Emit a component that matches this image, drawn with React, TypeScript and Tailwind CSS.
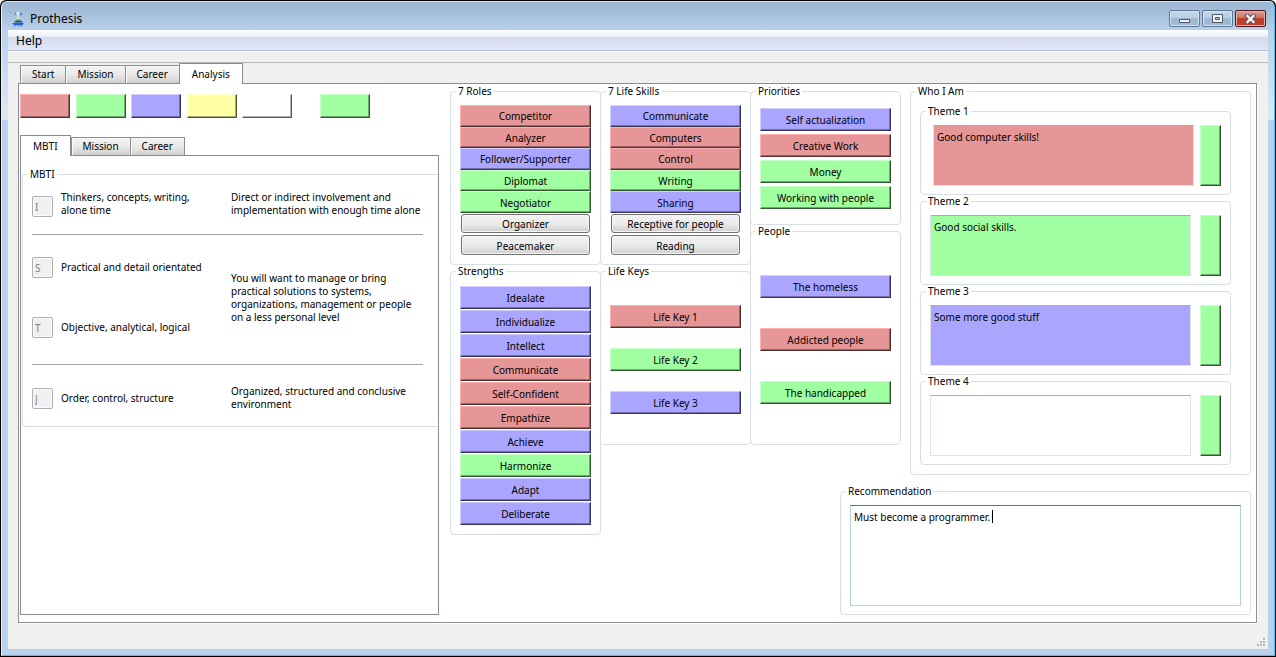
import { useState, type ReactNode } from "react";

type Tone = "red" | "green" | "purple" | "yellow" | "white";

const tones: Record<Tone, string> = {
  red: "bg-[#e69696] border-t-[#ffb0b0] border-l-[#ffb0b0] border-r-[#4d3232] border-b-[#4d3232] shadow-[inset_-1px_-1px_0_#9a6464]",
  green: "bg-[#a0ffa0] border-t-[#c8ffc8] border-l-[#c8ffc8] border-r-[#355535] border-b-[#355535] shadow-[inset_-1px_-1px_0_#6aaa6a]",
  purple: "bg-[#aaa5ff] border-t-[#d0cdff] border-l-[#d0cdff] border-r-[#383755] border-b-[#383755] shadow-[inset_-1px_-1px_0_#716eaa]",
  yellow: "bg-[#ffffa5] border-t-[#ffffd0] border-l-[#ffffd0] border-r-[#555537] border-b-[#555537] shadow-[inset_-1px_-1px_0_#aaaa6e]",
  white: "bg-white border-t-white border-l-white border-r-[#555555] border-b-[#555555] shadow-[inset_-1px_-1px_0_#b4b4b4]",
};

function Bevel({ tone, label, children, className = "" }: { tone: Tone; label?: string; children?: ReactNode; className?: string }) {
  return (
    <button type="button" aria-label={label} className={`block border text-center leading-[13px] ${tones[tone]} ${className}`}>
      {children}
    </button>
  );
}

function Group({ title, children, className = "", body = "" }: { title: string; children: ReactNode; className?: string; body?: string }) {
  return (
    <fieldset className={`min-w-0 rounded-[4px] border border-[#d5dfe5] ${className}`}>
      <legend className="ml-[5px] h-[13px] px-[2px] leading-[13px]">{title}</legend>
      <div className={body}>{children}</div>
    </fieldset>
  );
}

function Tabs({ names, active, onPick }: { names: string[]; active: string; onPick: (n: string) => void }) {
  return (
    <div role="tablist" className="flex items-end">
      {names.map((n) => {
        const on = n === active;
        return (
          <button
            key={n}
            type="button"
            role="tab"
            aria-selected={on}
            onClick={() => onPick(n)}
            className={
              on
                ? "relative z-10 -mb-px h-[21px] border border-b-0 border-[#898c95] bg-white px-3 leading-[13px]"
                : "-mr-px h-[18px] border border-b-0 border-[#898c95] bg-linear-to-b from-[#f3f3f3] via-[#e9e9e9] to-[#cfcfcf] px-[11px] leading-[13px] shadow-[inset_1px_1px_0_#fafafa]"
            }
          >
            {n}
          </button>
        );
      })}
    </div>
  );
}

const roles: [string, Tone | null][] = [
  ["Competitor", "red"],
  ["Analyzer", "red"],
  ["Follower/Supporter", "purple"],
  ["Diplomat", "green"],
  ["Negotiator", "green"],
  ["Organizer", null],
  ["Peacemaker", null],
];
const skills: [string, Tone | null][] = [
  ["Communicate", "purple"],
  ["Computers", "red"],
  ["Control", "red"],
  ["Writing", "green"],
  ["Sharing", "purple"],
  ["Receptive for people", null],
  ["Reading", null],
];
const strengths: [string, Tone][] = [
  ["Idealate", "purple"],
  ["Individualize", "purple"],
  ["Intellect", "purple"],
  ["Communicate", "red"],
  ["Self-Confident", "red"],
  ["Empathize", "red"],
  ["Achieve", "purple"],
  ["Harmonize", "green"],
  ["Adapt", "purple"],
  ["Deliberate", "purple"],
];
const lifeKeys: [string, Tone][] = [
  ["Life Key 1", "red"],
  ["Life Key 2", "green"],
  ["Life Key 3", "purple"],
];
const priorities: [string, Tone][] = [
  ["Self actualization", "purple"],
  ["Creative Work", "red"],
  ["Money", "green"],
  ["Working with people", "green"],
];
const people: [string, Tone][] = [
  ["The homeless", "purple"],
  ["Addicted people", "red"],
  ["The handicapped", "green"],
];
const themes = [
  { name: "Theme 1", text: "Good computer skills!", fill: "bg-[#e69696]", inset: true },
  { name: "Theme 2", text: "Good social skills.", fill: "bg-[#a0ffa0]", inset: false },
  { name: "Theme 3", text: "Some more good stuff", fill: "bg-[#aaa5ff]", inset: false },
  { name: "Theme 4", text: "", fill: "bg-white", inset: false },
];

function SevenList({ items }: { items: [string, Tone | null][] }) {
  return (
    <div className="grid h-[151px] grid-rows-7">
      {items.map(([name, tone]) =>
        tone ? (
          <Bevel key={name} tone={tone} className="w-full pt-[2px]">
            {name}
          </Bevel>
        ) : (
          <button
            key={name}
            type="button"
            className="m-px rounded-[3px] border border-[#707070] bg-linear-to-b from-[#f2f2f2] from-0% via-[#ebebeb] via-50% to-[#cfcfcf] to-100% pt-[2px] leading-[13px] shadow-[inset_0_0_0_1px_#f6f6f6]"
          >
            {name}
          </button>
        ),
      )}
    </div>
  );
}

function ToneList({ items, className }: { items: [string, Tone][]; className: string }) {
  return (
    <div className={`flex flex-col ${className}`}>
      {items.map(([name, tone]) => (
        <Bevel key={name} tone={tone} className="h-[23px] w-full pt-px">
          {name}
        </Bevel>
      ))}
    </div>
  );
}

function Letter({ value, label }: { value: string; label: string }) {
  return (
    <input
      disabled
      aria-label={label}
      defaultValue={value}
      className="h-[21px] w-[21px] shrink-0 rounded-[2px] border border-[#afafaf] bg-[#f0f0f0] pt-px pl-[2px] leading-[13px] text-[#808080] shadow-[inset_0_0_0_1px_#fafafa]"
    />
  );
}

function Trait({ letter, children, className }: { letter: string; children: ReactNode; className: string }) {
  return (
    <div className={`flex w-[199px] shrink-0 gap-2 ${className}`}>
      <Letter value={letter} label={`Type letter ${letter}`} />
      <p className="leading-[13px]">{children}</p>
    </div>
  );
}

function Mbti() {
  return (
    <Group title="MBTI" className="mt-[12px] ml-px rounded-r-none border-r-0" body="mr-[15px] ml-[9px]">
      <div className="flex h-[54px] items-start border-b border-[#a0a0a0] pt-[10px]">
        <Trait letter="I" className="items-end">
          Thinkers, concepts, writing,
          <br />
          alone time
        </Trait>
        <p className="leading-[13px] whitespace-nowrap">
          Direct or indirect involvement and
          <br />
          implementation with enough time alone
        </p>
      </div>
      <div className="flex h-[130px] items-center border-b border-[#a0a0a0] pb-1">
        <div className="flex flex-col gap-[39px]">
          <Trait letter="S" className="items-center">
            Practical and detail orientated
          </Trait>
          <Trait letter="T" className="items-center">
            Objective, analytical, logical
          </Trait>
        </div>
        <p className="leading-[13px] whitespace-nowrap">
          You will want to manage or bring
          <br />
          practical solutions to systems,
          <br />
          organizations, management or people
          <br />
          on a less personal level
        </p>
      </div>
      <div className="flex h-[61px] items-center pt-[5px]">
        <Trait letter="J" className="items-center">
          Order, control, structure
        </Trait>
        <p className="leading-[13px] whitespace-nowrap">
          Organized, structured and conclusive
          <br />
          environment
        </p>
      </div>
    </Group>
  );
}

function AppIcon() {
  return (
    <svg viewBox="0 0 16 16" className="h-4 w-4" aria-hidden="true">
      <path d="M4.500 4L6.500 1.500M12 4L10 1.500" stroke="#6a8fda" strokeWidth="1.800" />
      <path d="M6.500 1h3v2.500h-3z" fill="#e8f0fb" />
      <path d="M10 1.500l2 1.500-1.500 1.500z" fill="#3f6fd0" />
      <path d="M7 4h2v2H7z" fill="#cfdcf0" />
      <path d="M6.500 6h3v2h-3z" fill="#f3e57c" />
      <path d="M6.500 8h3.500v2h-4z" fill="#8fbf6a" />
      <path d="M4.500 10.500l2-1h4l2 1v1h-8z" fill="#17509c" />
      <path d="M2 12h12l-2 2.200H4.500z" fill="#1f5fc0" />
      <path d="M3 15h3M8 15h5" stroke="#6d9be0" strokeWidth="1" />
      <path d="M0 1h1v1H0z" fill="#6b7f99" />
    </svg>
  );
}

function CaptionButton({ label, close, children }: { label: string; close?: boolean; children: ReactNode }) {
  return (
    <button
      type="button"
      aria-label={label}
      className={`flex h-[17px] w-[31px] items-center justify-center rounded-[2px] border ${
        close
          ? "border-[#4a1420] bg-linear-to-b from-[#e0a095] from-0% via-[#cf7163] via-45% to-[#bf3f2a] to-50% shadow-[inset_0_0_0_1px_#e9b0a5]"
          : "border-[#5f7591] bg-linear-to-b from-[#c5d8ec] from-0% via-[#b8cfe6] via-45% to-[#9fb9d3] to-50% shadow-[inset_0_0_0_1px_#d5e4f3]"
      }`}
    >
      {children}
    </button>
  );
}

export default function App() {
  const [tab, setTab] = useState("Analysis");
  const [inner, setInner] = useState("MBTI");
  return (
    <div className="flex min-h-screen flex-col rounded-t-[6px] bg-black p-px font-['Noto_Sans',sans-serif] text-[10px] leading-[13px] text-black">
      <div className="flex flex-1 flex-col rounded-t-[6px] border border-t-[#dbe7f4] border-r-[#3cc7ee] border-b-[#3cc7ee] border-l-[#eef4fb] bg-[linear-gradient(180deg,#9ab4d2_0px,#b9d1ea_29px,#dce9f6_118px,#b9d1ea_118px)] pr-[6px] pb-[6px] pl-[6px]">
        <header className="flex h-7 items-start justify-between pr-[2px] pl-[2px]">
          <div className="flex items-center gap-[4px] pt-2 text-[12px] leading-[18px]">
            <AppIcon />
            <h1>Prothesis</h1>
          </div>
          <div className="flex gap-[2px] pt-2">
            <CaptionButton label="Minimize">
              <svg viewBox="0 0 13 10" className="h-[10px] w-[13px]">
                <path d="M1.500 5.500h10v3h-10z" fill="#f4f4f4" stroke="#4e5868" />
              </svg>
            </CaptionButton>
            <CaptionButton label="Maximize">
              <svg viewBox="0 0 13 10" className="h-[10px] w-[13px]">
                <path d="M1.500 0.500h10v8h-10z" fill="#f4f4f4" stroke="#4e5868" />
                <path d="M4.500 3.500h4v2h-4z" fill="#a9bfd6" stroke="#4e5868" />
              </svg>
            </CaptionButton>
            <CaptionButton label="Close" close>
              <svg viewBox="0 0 13 10" className="h-[10px] w-[13px]">
                <path d="M3.500 2L9.500 8M9.500 2L3.500 8" stroke="#53546a" strokeWidth="4.400" strokeLinecap="square" />
                <path d="M3.500 2L9.500 8M9.500 2L3.500 8" stroke="#f6f6f6" strokeWidth="2.400" strokeLinecap="square" />
              </svg>
            </CaptionButton>
          </div>
        </header>

        <div className="flex flex-1 flex-col bg-[#f0f0f0]">
          <nav className="flex h-[21px] items-center border-b border-[#b4b9d2] bg-[linear-gradient(180deg,#ffffff_0px,#e9edf6_7px,#d4daed_7px,#e2e6f5_20px)] pt-px pl-[6px] text-[12px]">
            <button type="button" className="px-[2px] leading-[18px]">
              Help
            </button>
          </nav>
          <div className="h-3 border-t border-b border-t-white border-b-[#b9b9b9]" />

          <main className="flex flex-1 flex-col pr-[11px] pb-[26px] pl-[10px]">
            <div className="pl-[2px]">
              <Tabs names={["Start", "Mission", "Career", "Analysis"]} active={tab} onPick={setTab} />
            </div>
            <section role="tabpanel" className="flex flex-1 border border-[#898c95] bg-white pr-[5px] pb-[7px] pl-px shadow-[1px_1px_0_#ffffff]">
              <div className="flex w-[419px] shrink-0 flex-col pt-[10px]">
                <div className="flex items-start gap-7">
                  <div className="flex w-[272px] justify-between">
                    <Bevel tone="red" label="Red" className="h-6 w-[50px]" />
                    <Bevel tone="green" label="Green" className="h-6 w-[50px]" />
                    <Bevel tone="purple" label="Purple" className="h-6 w-[50px]" />
                    <Bevel tone="yellow" label="Yellow" className="h-6 w-[50px]" />
                    <Bevel tone="white" label="White" className="h-6 w-[50px]" />
                  </div>
                  <Bevel tone="green" label="Selected colour" className="h-6 w-[50px]" />
                </div>
                <div className="mt-[17px]">
                  <Tabs names={["MBTI", "Mission", "Career"]} active={inner} onPick={setInner} />
                </div>
                <div role="tabpanel" className="flex-1 border border-[#898c95]">
                  <Mbti />
                </div>
              </div>

              <div className="ml-[11px] flex flex-1 items-start -space-x-px pt-px">
                <div className="w-[151px] shrink-0">
                  <Group title="7 Roles" body="px-[9px] pt-[7px] pb-2">
                    <SevenList items={roles} />
                  </Group>
                  <Group title="Strengths" body="px-[9px] pt-2 pb-[9px]">
                    <ToneList items={strengths} className="gap-px" />
                  </Group>
                </div>

                <div className="flex flex-1 flex-col">
                  <div className="flex items-start -space-x-px">
                    <div className="w-[151px] shrink-0">
                      <Group title="7 Life Skills" body="px-[9px] pt-[7px] pb-2">
                        <SevenList items={skills} />
                      </Group>
                      <Group title="Life Keys" body="px-[9px] pt-[27px] pb-[30px]">
                        <ToneList items={lifeKeys} className="gap-5" />
                      </Group>
                    </div>
                    <div className="w-[151px] shrink-0">
                      <Group title="Priorities" body="px-[9px] pt-[10px] pb-[15px]">
                        <ToneList items={priorities} className="gap-[3px]" />
                      </Group>
                      <Group title="People" body="px-[9px] pt-[37px] pb-[40px]">
                        <ToneList items={people} className="gap-[30px]" />
                      </Group>
                    </div>
                    <div className="flex-1 pl-[10px]">
                      <Group title="Who I Am" body="pt-[7px] pr-[19px] pb-[9px] pl-[9px]">
                        {themes.map((t) => (
                          <Group key={t.name} title={t.name} body="px-[9px] pt-[7px] pb-2">
                            <div className={`flex ${t.inset ? "gap-[6px] pl-[3px]" : "gap-[9px]"}`}>
                              <textarea
                                aria-label={t.name}
                                defaultValue={t.text}
                                className={`h-[61px] min-w-0 flex-1 resize-none border border-[#dfe1ea] border-t-[#abadb3] px-[3px] pt-[5px] leading-[13px] outline-none ${t.fill}`}
                              />
                              <Bevel tone="green" label={`${t.name} colour`} className="h-[61px] w-[21px]" />
                            </div>
                          </Group>
                        ))}
                      </Group>
                    </div>
                  </div>
                  <div className="mt-[10px] w-[411px] self-end">
                    <Group title="Recommendation" body="px-[9px] pt-[7px] pb-2">
                      <div className="relative">
                        <textarea
                          aria-label="Recommendation"
                          defaultValue="Must become a programmer."
                          className="block h-[101px] w-full resize-none border border-[#b5cfe7] border-t-[#3d7bad] px-[3px] pt-[5px] leading-[13px] outline-none"
                        />
                        <span className="absolute top-[5px] left-[142px] h-[13px] w-px bg-black" />
                      </div>
                    </Group>
                  </div>
                </div>
              </div>
            </section>
          </main>
          <footer className="-mt-3 flex justify-end pr-[2px] pb-[2px]">
            <svg viewBox="0 0 10 10" className="h-[10px] w-[10px]" fill="#b8b8b8" aria-hidden="true">
              <path d="M7 1h2v2H7zM7 4h2v2H7zM4 4h2v2H4zM7 7h2v2H7zM4 7h2v2H4zM1 7h2v2H1z" />
            </svg>
          </footer>
        </div>
      </div>
    </div>
  );
}
